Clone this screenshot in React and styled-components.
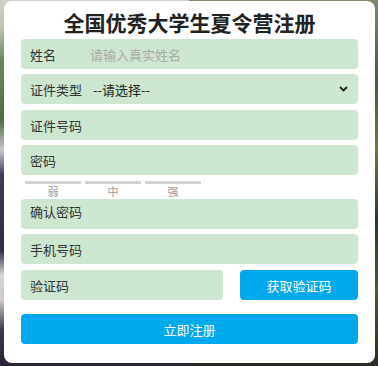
import React from "react";
import styled, { createGlobalStyle } from "styled-components";

const Global = createGlobalStyle`
  html, body { margin: 0; padding: 0; }
  body { font-family: "Noto Sans CJK SC", "Noto Sans", sans-serif; }
`;

const Page = styled.div`
  width: 378px;
  height: 366px;
  box-sizing: border-box;
  padding: 1px 3px 3px 4px;
  background:
    linear-gradient(180deg, #cfd4c8 0px, #b7c0ad 30px, #6c8660 60px, #4f6d45 120px, #c9c7cf 150px, #3e3a57 175px, #2d2b48 250px, #d9d2d4 275px, #cfc7c9 300px, #3d364a 330px, #2a2436 366px) left top / 50% 100% no-repeat,
    linear-gradient(180deg, #7d8a6c 0px, #4a5a40 80px, #6e7a3e 150px, #2f3536 220px, #4d5a2f 290px, #2b2a25 366px) right top / 50% 100% no-repeat;
`;

const Card = styled.div`
  height: 362px;
  box-sizing: border-box;
  background: #fff;
  border-radius: 8px;
  padding: 5px 17px 0 17px;
  display: flex;
  flex-direction: column;
`;

const Title = styled.h1`
  margin: 0;
  font-size: 21px;
  line-height: 32px;
  font-weight: 700;
  color: #222;
  text-align: center;
`;

const Field = styled.div`
  height: 30px;
  margin-top: ${(p) => p.$mt ?? 5}px;
  background: #cde7d0;
  border-radius: 4px;
  display: flex;
  align-items: ${(p) => (p.$raised ? "flex-start" : "center")};
  padding: ${(p) => (p.$raised ? "3px" : "0")} 9px 0 9px;
  box-sizing: border-box;
  font-size: 13px;
  color: #333;
  flex: ${(p) => (p.$grow ? "1" : "none")};
`;

const Label = styled.span`
  width: 60px;
  flex: none;
  white-space: nowrap;
`;

const Placeholder = styled.span`
  color: #a9a9a9;
`;

const SelectText = styled.span`
  flex: 1;
  margin-left: 3px;
  color: #222;
`;

const Chevron = styled.svg`
  width: 9px;
  height: 6px;
  margin-right: 1px;
`;

const Strength = styled.div`
  display: flex;
  gap: 4px;
  padding-left: 4px;
  margin-top: 6px;
`;

const Level = styled.div`
  width: 56px;
  display: flex;
  flex-direction: column;
  align-items: center;
`;

const Bar = styled.div`
  width: 100%;
  height: 3px;
  background: #d4d4d4;
`;

const LevelText = styled.span`
  font-size: 11px;
  line-height: 13px;
  color: #9a9a9a;
  margin-top: 1px;
`;

const Row = styled.div`
  display: flex;
  gap: 17px;
  margin-top: 6px;
`;

const Button = styled.button`
  height: 30px;
  border: none;
  border-radius: 4px;
  background: #00a8ec;
  color: #fff;
  font-family: inherit;
  font-size: 13px;
  padding: 0;
  width: ${(p) => p.$width || "100%"};
  flex: none;
  margin-top: ${(p) => p.$mt || 0}px;
`;

export default function App() {
  return (
    <>
      <Global />
      <Page>
        <Card>
          <Title>全国优秀大学生夏令营注册</Title>
          <Field $mt={1}>
            <Label>姓名</Label>
            <Placeholder>请输入真实姓名</Placeholder>
          </Field>
          <Field>
            <Label>证件类型</Label>
            <SelectText>--请选择--</SelectText>
            <Chevron viewBox="0 0 9 6">
              <path d="M1 1 L4.5 4.5 L8 1" fill="none" stroke="#222" strokeWidth="1.8" />
            </Chevron>
          </Field>
          <Field $mt={6}>
            <Label>证件号码</Label>
          </Field>
          <Field>
            <Label>密码</Label>
          </Field>
          <Strength>
            <Level>
              <Bar />
              <LevelText>弱</LevelText>
            </Level>
            <Level>
              <Bar />
              <LevelText>中</LevelText>
            </Level>
            <Level>
              <Bar />
              <LevelText>强</LevelText>
            </Level>
          </Strength>
          <Field $mt={1} $raised>
            <Label>确认密码</Label>
          </Field>
          <Field>
            <Label>手机号码</Label>
          </Field>
          <Row>
            <Field $mt={0} $grow>
              <Label>验证码</Label>
            </Field>
            <Button $width="118px">获取验证码</Button>
          </Row>
          <Button $mt={14}>立即注册</Button>
        </Card>
      </Page>
    </>
  );
}
